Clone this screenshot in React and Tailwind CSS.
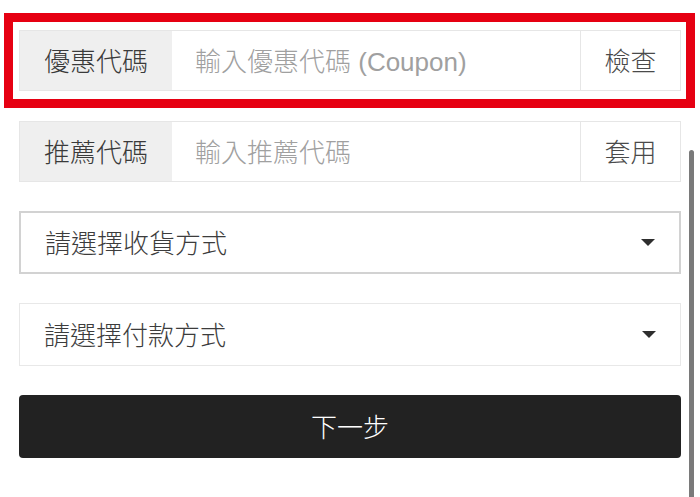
import React from "react";

function CodeRow({ label, placeholder, action }) {
  return (
    <div className="flex h-[61px] border border-[#e6e6e6] bg-white pt-[3px]">
      <div className="-mt-[3px] flex w-[152px] shrink-0 items-center bg-[#efefef] pl-[24px] pt-[3px] text-[#3a3a3a]">
        {label}
      </div>
      <div className="flex flex-1 items-center pl-[23px] text-[#a0a0a0]">{placeholder}</div>
      <div className="-mt-[3px] flex w-[100px] shrink-0 items-center justify-center border-l border-[#e6e6e6] pt-[3px] text-[#4a4a4a]">
        {action}
      </div>
    </div>
  );
}

function SelectRow({ text, strong }) {
  return (
    <div
      className={
        "flex h-[63px] items-center justify-between bg-white pl-[24px] pr-[24px] text-[#3c3c3c] " +
        (strong ? "border-2 border-[#d2d2d2]" : "border border-[#e8e8e8]")
      }
    >
      <span className="pt-[3px]">{text}</span>
      <span className="h-0 w-0 border-x-[7px] border-t-[7px] border-x-transparent border-t-[#2e2e2e]" />
    </div>
  );
}

export default function App() {
  return (
    <div
      className="relative h-[497px] w-[700px] overflow-hidden bg-white text-[26px] font-light leading-none"
      style={{ fontFamily: '"Liberation Sans", "Noto Sans CJK TC", sans-serif' }}
    >
      <div className="pt-[13px]">
        <div className="ml-[4px] mr-[5px] border-[9px] border-[#e60012] pb-[8px] pl-[6px] pr-[5px] pt-[8px]">
          <CodeRow label="優惠代碼" placeholder="輸入優惠代碼 (Coupon)" action="檢查" />
        </div>

        <div className="flex flex-col gap-[29px] px-[19px] pt-[13px]">
          <CodeRow label="推薦代碼" placeholder="輸入推薦代碼" action="套用" />
          <SelectRow text="請選擇收貨方式" strong />
          <SelectRow text="請選擇付款方式" />
          <button className="flex h-[63px] items-center justify-center rounded-[4px] bg-[#222222] pt-[3px] text-white">
            下一步
          </button>
        </div>
      </div>

      <div className="absolute right-[6px] top-[150px] h-[360px] w-[5px] rounded-full bg-[#7a7a7a]" />
    </div>
  );
}
